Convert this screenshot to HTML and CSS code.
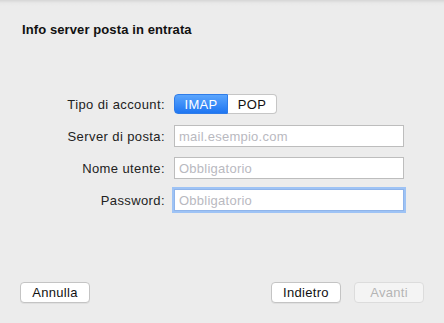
FILE: index.html
```html
<!DOCTYPE html>
<html lang="it">
  <head>
    <meta charset="UTF-8" />
    <meta name="viewport" content="width=device-width, initial-scale=1.0" />
    <title>Info server posta in entrata</title>
    <link rel="stylesheet" href="styles.css">
  </head>
  <body>
    <div class="sheet">
      <h1 class="title">Info server posta in entrata</h1>
      <form class="form" onsubmit="return false">
        <label class="label">Tipo di account:</label>
        <div class="segmented">
          <button type="button" class="segment active">IMAP</button>
          <button type="button" class="segment">POP</button>
        </div>
        <label class="label" for="server">Server di posta:</label>
        <input id="server" class="field" type="text" placeholder="mail.esempio.com" />
        <label class="label" for="user">Nome utente:</label>
        <input id="user" class="field" type="text" placeholder="Obbligatorio" />
        <label class="label" for="pass">Password:</label>
        <input id="pass" class="field focused" type="password" placeholder="Obbligatorio" />
      </form>
      <div class="footer">
        <button type="button" class="btn">Annulla</button>
        <div class="footer-right">
          <button type="button" class="btn">Indietro</button>
          <button type="button" class="btn" disabled>Avanti</button>
        </div>
      </div>
    </div>
  </body>
</html>
```

FILE: styles.css
```css
html, body {
  margin: 0;
  height: 100%;
}
body {
  font-family: "Liberation Sans", Arial, sans-serif;
  font-size: 13px;
  color: #1a1a1a;
  background: #ececec;
}
.sheet {
  height: 323px;
  box-sizing: border-box;
  display: flex;
  flex-direction: column;
  background: linear-gradient(#d6d6d6, #e8e8e8 3px, #ececec 6px);
  padding: 0 20px 20px 20px;
}
.title {
  margin: 0;
  padding: 22px 0 0 2px;
  font-size: 13px;
  line-height: 15px;
  font-weight: bold;
  letter-spacing: 0.1px;
  color: #111;
}
.form {
  margin-top: 57px;
  display: grid;
  grid-template-columns: 146px 230px;
  column-gap: 8px;
  row-gap: 10px;
  align-items: center;
}
.label {
  text-align: right;
  color: #222;
  letter-spacing: 0.4px;
  padding-right: 1px;
}
.segmented {
  display: flex;
  width: 103px;
  height: 20px;
  margin-bottom: 1px;
}
.segment {
  flex: 1;
  font: inherit;
  font-size: 13px;
  letter-spacing: 0.3px;
  border: 1px solid #c6c6c6;
  background: #fff;
  color: #111;
  padding: 0;
  border-radius: 0 4px 4px 0;
  border-left: none;
}
.segment.active {
  flex: 0 0 54px;
  background: linear-gradient(#5aa5fd, #1f76f2);
  border-color: #2f7ce8;
  border-left: 1px solid #2f7ce8;
  border-radius: 4px 0 0 4px;
  color: #fff;
}
.field {
  box-sizing: border-box;
  width: 230px;
  height: 22px;
  margin: 0;
  padding: 0 4px;
  font: inherit;
  font-size: 13px;
  letter-spacing: 0.25px;
  border: 1px solid #bdbdbd;
  background: #fff;
  outline: none;
}
.field::placeholder {
  color: #b9b9bf;
}
.field.focused {
  border-color: #8fb4ea;
  box-shadow: 0 0 0 2px #9ec3f5;
}
.footer {
  margin-top: auto;
  display: flex;
  justify-content: space-between;
  align-items: center;
}
.footer-right {
  display: flex;
  gap: 13px;
}
.btn {
  box-sizing: border-box;
  width: 70px;
  height: 21px;
  padding: 0;
  font: inherit;
  font-size: 13px;
  letter-spacing: 0.3px;
  color: #111;
  background: #fff;
  border: 1px solid #c4c4c4;
  border-radius: 4px;
  box-shadow: 0 1px 0 rgba(0, 0, 0, 0.05);
}
.btn:disabled {
  color: #b4b4b4;
  background: #f4f4f4;
  border-color: #dcdcdc;
  box-shadow: none;
}
```
